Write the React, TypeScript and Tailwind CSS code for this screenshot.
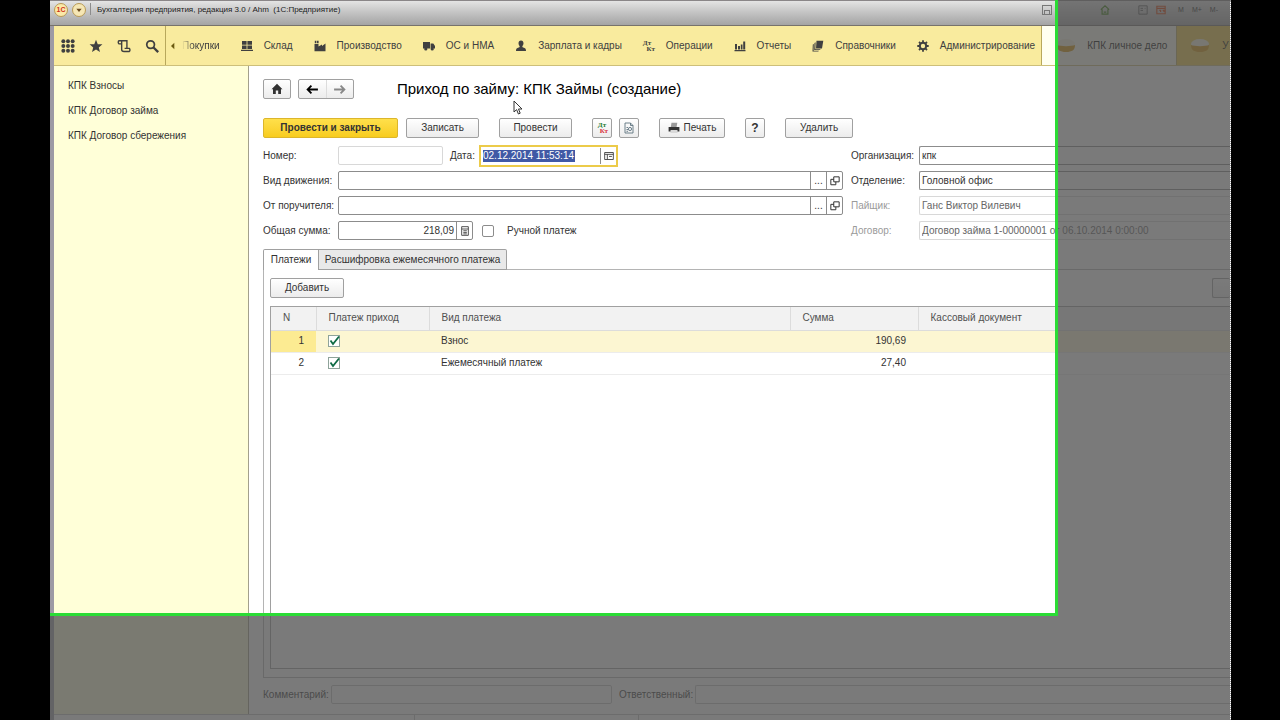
import { useState } from 'react';
import type { ReactNode } from 'react';
import clsx from 'clsx';

type IconProps = { children: ReactNode; className?: string };

const Icon = ({ children, className = 'size-3' }: IconProps) => (
  <svg viewBox="0 0 12 12" fill="currentColor" aria-hidden="true" className={clsx('shrink-0', className)}>
    {children}
  </svg>
);

const stroke = { fill: 'none', stroke: 'currentColor' };

const GridIcon = () => (
  <Icon className="size-[14px]">
    {[2, 6, 10].map((y) => [2, 6, 10].map((x) => <circle key={`${x}-${y}`} cx={x} cy={y} r="1.7" />))}
  </Icon>
);

const StarIcon = () => (
  <Icon className="size-[14px]">
    <path d="M6 .6l1.5 3.8 4 .2-3.100 2.600 1 4L6 9l-3.400 2.200 1-4L.5 4.600l4-.2z" />
  </Icon>
);

const HistoryIcon = () => (
  <Icon className="size-[14px]">
    <path {...stroke} strokeWidth="1.200" d="M4 1.500h4.500v6M4 1.500v7.500c0 1.500 1 1.700 2 1.700h4.500c.8-.6.8-2 0-2.700H6.500M4 4.200H1.800c-1-.8-1-2.200 0-2.700H4" />
  </Icon>
);

const SearchIcon = () => (
  <Icon className="size-[14px]">
    <circle {...stroke} strokeWidth="1.500" cx="4.800" cy="4.800" r="3.300" />
    <path {...stroke} strokeWidth="2" d="M7.300 7.300l4 4" />
  </Icon>
);

const StockIcon = () => (
  <Icon>
    <path d="M1 1h4.600v3.700H1zM6.400 1H11v3.700H6.400zM1 5.400h4.600V9H1zM6.400 5.400H11V9H6.400zM0 9.800h12V11H0z" />
  </Icon>
);

const FactoryIcon = () => (
  <Icon>
    <path d="M.5 11.300V4h4v2.500L8 4.500V6l3.500-2.500v7.800zM.8.800h1.600v2.400H.8zM3 .8h1.600v2.400H3z" />
  </Icon>
);

const TruckIcon = () => (
  <Icon>
    <path d="M0 2h7v6.500H0zM7.600 3.500h2.700L12 6v2.500H7.600z" />
    <circle cx="2.800" cy="9" r="1.600" />
    <circle cx="9.200" cy="9" r="1.600" />
  </Icon>
);

const PersonIcon = () => (
  <Icon>
    <path d="M6 .5c1.700 0 2.500 1.200 2.500 2.700S7.600 5.800 7.300 6.200c0 1 .4 1.200 1.700 1.600 1.500.5 2 1.200 2 3.200H1c0-2 .5-2.700 2-3.200 1.300-.4 1.700-.6 1.700-1.600-.3-.4-1.200-1.500-1.200-3S4.300.5 6 .5z" />
  </Icon>
);

const ChartIcon = () => (
  <Icon>
    <path d="M.5 10h11v1.200H.5zM1 4h2v5.500H1zM4 6h2v3.500H4zM6.800 4.500h1.700v5H6.800zM9.200 1.500h2v8h-2z" />
  </Icon>
);

const BooksIcon = () => (
  <Icon>
    <path d="M4.500.7h6.800L10 8.500H4zM3.600 2.300L2.500 3l-.3 7h5.600l1-.8H3.400zM1.800 4L.8 4.600l-.3 7h5.700l.8-.8H1.600z" />
  </Icon>
);

const GearIcon = () => (
  <Icon>
    <circle {...stroke} strokeWidth="2" cx="6" cy="6" r="3.200" />
    <path
      {...stroke}
      strokeWidth="1.800"
      d="M6 .3v2M6 9.700v2M.3 6h2M9.700 6h2M2 2l1.400 1.400M8.600 8.600L10 10M10 2L8.600 3.400M3.400 8.600L2 10"
    />
  </Icon>
);

const DtKt = ({ colored = false }: { colored?: boolean }) => (
  <span aria-hidden="true" className="flex w-3 shrink-0 flex-col font-serif text-[7px] leading-[6px] font-bold">
    <span className={clsx(colored && 'text-[#1d7a2f]')}>Дт</span>
    <span className={clsx('self-end', colored && 'text-[#d8323c]')}>Кт</span>
  </span>
);

const HomeIcon = () => (
  <Icon>
    <path d="M6 .8l5.500 5.400H10V11H7.200V7.500H4.800V11H2V6.200H.5z" />
  </Icon>
);

const ArrowIcon = ({ flip = false }: { flip?: boolean }) => (
  <Icon className={clsx('size-[13px]', flip && 'rotate-180')}>
    <path {...stroke} strokeWidth="1.700" d="M11 6H1.500M5 2.500L1.500 6 5 9.500" />
  </Icon>
);

const ReportIcon = () => (
  <Icon>
    <path {...stroke} strokeWidth=".9" d="M2 1h5.500L10 3.500V11H2zM7.500 1v2.500H10M3.500 5.500h1.500M3.500 7.500h1.500M3.500 9.300h1.500" />
    <circle {...stroke} strokeWidth=".9" cx="7" cy="7" r="1.600" />
  </Icon>
);

const PrinterIcon = () => (
  <Icon>
    <path fill="#9a9a9a" d="M3.500.8h5.800L8.600 5H2.800z" />
    <path d="M.6 5h10.800v4.500H.6z" />
    <path fill="#d9d9d9" d="M2.500 8h7v3h-7z" />
  </Icon>
);

const CalendarIcon = () => (
  <Icon className="size-[10px]">
    <path {...stroke} d="M.8 1.800h10.400v8.400H.8zM.8 4h10.400M4 4v6M6 6.500h3.500" />
  </Icon>
);

const CalculatorIcon = () => (
  <Icon className="size-[10px]">
    <path {...stroke} d="M2 .8h8v10.400H2zM2 3.600h8M4 5.700h4.200M4 7.700h4.200M4 9.500h4.200" />
  </Icon>
);

const OpenIcon = () => (
  <Icon className="size-[10px]">
    <path {...stroke} strokeWidth="1.200" d="M4.500 1h6.500v6H4.500zM4.500 4H1v6.500h6V7" />
  </Icon>
);

const CoinsIcon = () => (
  <svg viewBox="0 0 20 16" aria-hidden="true" className="h-4 w-5 shrink-0">
    <ellipse cx="10" cy="6" rx="9" ry="5" fill="#f6f2dc" />
    <path fill="#d89400" d="M1 7c3 1.500 15 1.500 18 0 0 5-3 7-9 7s-9-2-9-7z" />
  </svg>
);

const sections = [
  { title: 'Склад', icon: <StockIcon /> },
  { title: 'Производство', icon: <FactoryIcon /> },
  { title: 'ОС и НМА', icon: <TruckIcon /> },
  { title: 'Зарплата и кадры', icon: <PersonIcon /> },
  { title: 'Операции', icon: <DtKt /> },
  { title: 'Отчеты', icon: <ChartIcon /> },
  { title: 'Справочники', icon: <BooksIcon /> },
  { title: 'Администрирование', icon: <GearIcon /> },
];

const quickTools = [
  { title: 'Меню', icon: <GridIcon /> },
  { title: 'Избранное', icon: <StarIcon /> },
  { title: 'История', icon: <HistoryIcon /> },
  { title: 'Поиск', icon: <SearchIcon /> },
];

const TitleBar = () => (
  <header className="flex h-[26px] shrink-0 items-start border-t border-b border-t-[#8a8688] border-b-[#77736c] bg-linear-to-b from-[#e4e4e4] via-[#c2c2c2] to-[#a4a4a4] pt-[2px] pl-1">
    <span className="flex size-[14px] items-center justify-center rounded-full border border-[#b89a56] bg-[#fbe9a8] text-[7px] font-bold text-[#d0321e]">
      1С
    </span>
    <button
      aria-label="Главное меню"
      className="ml-1 flex size-[14px] items-center justify-center rounded-full border border-[#b89a56] bg-[#f5e6b4] text-[#6b4a1e]"
    >
      <Icon className="size-2">
        <path d="M2 4h8L6 9z" />
      </Icon>
    </button>
    <span className="ml-[4px] h-3 border-l border-[#8c8c8c]" />
    <span className="ml-[6px] text-[8px] leading-[14px] whitespace-pre text-[#1c1c1c]">
      Бухгалтерия предприятия, редакция 3.0 / Ahm  (1С:Предприятие)
    </span>
    <div className="mr-3 ml-auto flex items-center gap-2 pt-[2px] text-[7px] leading-[10px] text-[#222]">
      <span className="mr-10 flex size-[10px] items-end justify-center border border-[#777]">
        <span className="h-1 w-[6px] border border-b-0 border-[#777]" />
      </span>
      <Icon className="mr-5 size-[10px] text-[#2f7a00]">
        <path {...stroke} strokeWidth="1.400" d="M1 5.500L6 1l5 4.500M2.500 5v6h7V5M4.500 8.500h3" />
      </Icon>
      <Icon className="size-[10px] text-[#444]">
        <path {...stroke} d="M1 1h10v10H1zM3 4h3M3 6.500h3M8 4h1" />
      </Icon>
      <Icon className="size-[10px] text-[#d83a00]">
        <path {...stroke} strokeWidth="1.400" d="M1 1.500h10v9H1zM1 4h10M4 6.500h1.500v2M8 6.500h1.500v2" />
      </Icon>
      <span className="pl-1">M</span>
      <span>M+</span>
      <span>M-</span>
    </div>
  </header>
);

const SectionBar = () => (
  <nav className="flex h-10 shrink-0 overflow-hidden border-b border-[#cdbf7a] bg-[#f9eb9e] text-[#404040]">
    <div className="flex w-[112px] shrink-0 items-center gap-[14px] border-r border-[#b8a85c] pl-[7px]">
      {quickTools.map(({ title, icon }) => (
        <button key={title} aria-label={title}>
          {icon}
        </button>
      ))}
    </div>
    <button aria-label="Прокрутить влево" className="w-4 shrink-0 pl-[3px] text-[#6b5a10]">
      <Icon className="size-2">
        <path d="M8 1v10L3 6z" />
      </Icon>
    </button>
    <div className="flex shrink-0 items-center gap-[21px] border-r border-[#b8a85c] pr-[6px]">
      <a href="#buy" className="mask-linear-90 mask-linear-from-transparent mask-linear-from-0% mask-linear-to-black mask-linear-to-30%">
        Покупки
      </a>
      {sections.map(({ title, icon }) => (
        <a key={title} href="#section" className="flex items-center gap-[11px] whitespace-nowrap">
          {icon}
          {title}
        </a>
      ))}
    </div>
    <a href="#case" className="flex w-[135px] shrink-0 items-center gap-[11px] border-r border-[#b8a85c] bg-[#fffff0] pl-[14px] whitespace-nowrap text-black">
      <CoinsIcon />
      КПК личное дело
    </a>
    <a href="#account" className="flex flex-1 items-center gap-3 bg-[#f0cc40] pl-[13px] text-black">
      <CoinsIcon />
      У
    </a>
  </nav>
);

const Sidebar = () => (
  <aside className="w-[195px] shrink-0 border-r border-[#a3a08c] bg-[#ffffd8] pt-[14px] pl-[14px]">
    <ul className="flex flex-col gap-[13px] leading-3">
      {['КПК Взносы', 'КПК Договор займа', 'КПК Договор сбережения'].map((text) => (
        <li key={text}>
          <a href="#item">{text}</a>
        </li>
      ))}
    </ul>
  </aside>
);

const Button = ({ children, className, label }: { children: ReactNode; className: string; label?: string }) => (
  <button
    aria-label={label}
    className={clsx(
      'flex h-5 shrink-0 items-center justify-center gap-1 rounded-xs border border-[#a0a0a0] bg-linear-to-b from-white to-[#ececec]',
      className,
    )}
  >
    {children}
  </button>
);

const inputBox = 'h-[19px] rounded-xs border border-[#8c8c8c] bg-white';

const Lookup = ({ id, label }: { id: string; label: string }) => (
  <div className="flex h-[25px] items-center">
    <label htmlFor={id} className="w-[75px]">
      {label}
    </label>
    <div className={clsx('flex w-[505px]', inputBox)}>
      <input id={id} className="min-w-0 flex-1 px-1 outline-none" />
      <button type="button" aria-label="Выбрать" className="w-4 border-l border-[#8c8c8c]">
        ...
      </button>
      <button
        type="button"
        aria-label="Открыть"
        className="flex w-4 items-center justify-center border-l border-[#8c8c8c]"
      >
        <OpenIcon />
      </button>
    </div>
  </div>
);

type SideFieldProps = { id: string; label: string; value: string; muted?: boolean };

const SideField = ({ id, label, value, muted = false }: SideFieldProps) => (
  <div className="flex h-[25px] items-center">
    <label htmlFor={id} className={clsx('w-[68px] shrink-0', muted && 'text-[#9a9a9a]')}>
      {label}
    </label>
    <input
      id={id}
      defaultValue={value}
      readOnly={muted}
      className={clsx(
        'h-[19px] min-w-0 flex-1 rounded-l-xs border border-r-0 bg-white px-[2px] outline-none',
        muted ? 'border-[#d8d8d8] text-[#666]' : 'border-[#8c8c8c]',
      )}
    />
  </div>
);

const Commands = () => (
  <>
    <div className="flex items-center">
      <Button label="Домой" className="w-7">
        <HomeIcon />
      </Button>
      <div className="ml-[7px] flex h-5 w-14 rounded-xs border border-[#a0a0a0] bg-linear-to-b from-white to-[#ececec]">
        <button aria-label="Назад" className="flex flex-1 items-center justify-center text-black">
          <ArrowIcon />
        </button>
        <button aria-label="Вперед" className="flex flex-1 items-center justify-center border-l border-[#dcdcdc] text-[#888]">
          <ArrowIcon flip />
        </button>
      </div>
      <h1 className="ml-[43px] text-[15px] leading-5 whitespace-nowrap text-black">
        Приход по займу: КПК Займы (создание)
      </h1>
    </div>
    <div className="mt-[19px] flex items-center gap-5">
      <div className="flex gap-2">
        <button className="h-5 w-[135px] rounded-xs border border-[#dcb62c] bg-linear-to-b from-[#ffe04a] to-[#f8cc1c] font-bold">
          Провести и закрыть
        </button>
        <Button className="w-[73px]">Записать</Button>
      </div>
      <Button className="w-[73px]">Провести</Button>
      <div className="flex gap-[7px]">
        <Button label="Дт Кт" className="w-5">
          <DtKt colored />
        </Button>
        <Button label="Отчет" className="w-5 text-[#5f7480]">
          <ReportIcon />
        </Button>
      </div>
      <Button className="w-[66px]">
        <PrinterIcon />
        Печать
      </Button>
      <Button label="Справка" className="w-5">
        <span className="text-[12px] font-bold">?</span>
      </Button>
      <Button className="w-[68px]">Удалить</Button>
    </div>
  </>
);

const Form = () => (
  <form className="mt-[5px] flex gap-2">
    <div className="shrink-0">
      <div className="flex h-[25px] items-center">
        <label htmlFor="number" className="w-[75px]">
          Номер:
        </label>
        <input id="number" className="h-[19px] w-[105px] rounded-xs border border-[#d8d8d8] px-1 outline-none" />
        <label htmlFor="date" className="ml-[7px] w-[29px]">
          Дата:
        </label>
        <div className="flex h-[22px] w-[139px] items-center border-2 border-[#eccb4a] bg-white pl-[2px]">
          <input
            id="date"
            defaultValue="02.12.2014 11:53:14"
            className="h-3 w-[92px] bg-[#4059a5] text-white outline-none"
          />
          <button
            type="button"
            aria-label="Календарь"
            className="ml-auto flex h-4 w-4 items-center justify-center border-l border-[#8c8c8c]"
          >
            <CalendarIcon />
          </button>
        </div>
      </div>
      <Lookup id="movement" label="Вид движения:" />
      <Lookup id="guarantor" label="От поручителя:" />
      <div className="flex h-[25px] items-center">
        <label htmlFor="total" className="w-[75px]">
          Общая сумма:
        </label>
        <div className={clsx('flex w-[135px]', inputBox)}>
          <input id="total" defaultValue="218,09" className="min-w-0 flex-1 px-[2px] text-right outline-none" />
          <button
            type="button"
            aria-label="Калькулятор"
            className="flex w-4 items-center justify-center border-l border-[#8c8c8c]"
          >
            <CalculatorIcon />
          </button>
        </div>
        <input
          id="manual"
          type="checkbox"
          className="ml-[9px] size-3 appearance-none rounded-xs border border-[#8c8c8c] bg-white"
        />
        <label htmlFor="manual" className="ml-[13px]">
          Ручной платеж
        </label>
      </div>
    </div>
    <div className="min-w-0 flex-1">
      <SideField id="org" label="Организация:" value="кпк" />
      <SideField id="dept" label="Отделение:" value="Головной офис" />
      <SideField id="member" label="Пайщик:" value="Ганс Виктор Вилевич" muted />
      <SideField id="contract" label="Договор:" value="Договор займа 1-00000001 от 06.10.2014 0:00:00" muted />
    </div>
  </form>
);

const payments = [
  { id: 1, kind: 'Взнос', sum: '190,69' },
  { id: 2, kind: 'Ежемесячный платеж', sum: '27,40' },
];

const PaymentTable = () => {
  const [selected, setSelected] = useState(1);

  return (
    <div className="mt-2 ml-[6px] flex-1 border border-r-0 border-[#a0a0a0]">
      <table className="w-full table-fixed border-collapse text-left">
        <colgroup>
          <col className="w-[45px]" />
          <col className="w-[113px]" />
          <col className="w-[361px]" />
          <col className="w-[128px]" />
          <col />
        </colgroup>
        <thead>
          <tr className="h-[23px] border-b border-[#dcdcdc] bg-[#f2f2f2] text-[#505050]">
            <th className="border-r border-[#dcdcdc] pl-3 font-normal">N</th>
            <th className="border-r border-[#dcdcdc] pl-3 font-normal">Платеж приход</th>
            <th className="border-r border-[#dcdcdc] pl-3 font-normal">Вид платежа</th>
            <th className="border-r border-[#dcdcdc] pl-3 font-normal">Сумма</th>
            <th className="pl-3 font-normal">Кассовый документ</th>
          </tr>
        </thead>
        <tbody>
          {payments.map(({ id, kind, sum }) => (
            <tr
              key={id}
              onClick={() => setSelected(id)}
              className={clsx('h-[22px] border-b border-[#ececec]', selected === id && 'bg-[#fcf6d2]')}
            >
              <td className={clsx('pr-3 text-right', selected === id && 'bg-[#fceb92]')}>{id}</td>
              <td className="pl-3">
                <span className="relative block size-3">
                  <input
                    type="checkbox"
                    defaultChecked
                    aria-label={kind}
                    className="block size-3 appearance-none border border-[#8fa39a] bg-white"
                  />
                  <Icon className="pointer-events-none absolute inset-0 size-3 text-[#0f6b45]">
                    <path {...stroke} strokeWidth="1.800" d="M2.500 5.500L5 9l6-7.500" />
                  </Icon>
                </span>
              </td>
              <td className="pl-3">{kind}</td>
              <td className="pr-3 text-right">{sum}</td>
              <td />
            </tr>
          ))}
        </tbody>
      </table>
    </div>
  );
};

const Tabs = () => (
  <section className="mt-[6px] flex flex-1 flex-col">
    <div role="tablist" className="z-10 -mb-px flex h-[21px]">
      <button role="tab" aria-selected="true" className="w-14 rounded-tl-xs border border-b-0 border-[#a0a0a0] bg-white">
        Платежи
      </button>
      <button role="tab" aria-selected="false" className="w-[188px] rounded-tr-xs border border-l-0 border-[#a0a0a0] bg-[#e9e9e9]">
        Расшифровка ежемесячного платежа
      </button>
    </div>
    <div className="flex flex-1 flex-col border border-r-0 border-[#b4b4b4] pt-2 pb-2">
      <div className="flex justify-between pl-[6px]">
        <Button className="w-[74px]">Добавить</Button>
        <Button label="Еще" className="w-[18px] border-r-0">
          {null}
        </Button>
      </div>
      <PaymentTable />
    </div>
  </section>
);

const Footer = () => (
  <div className="mt-[7px] mb-[10px] flex items-center">
    <label htmlFor="comment" className="w-[68px] shrink-0 whitespace-nowrap">
      Комментарий:
    </label>
    <input id="comment" className="h-[19px] w-[281px] rounded-xs border border-[#c4c4c4] px-1" />
    <label htmlFor="author" className="ml-[7px] w-[76px] shrink-0 whitespace-nowrap">
      Ответственный:
    </label>
    <input id="author" className="h-[19px] min-w-0 flex-1 rounded-l-xs border border-r-0 border-[#c4c4c4] px-1" />
  </div>
);

const Pointer = () => (
  <svg viewBox="0 0 10 15" aria-hidden="true" className="absolute top-[100px] left-[463px] h-[15px] w-[10px]">
    <path fill="#fff" stroke="#333" d="M1 1v11l2.600-2.400L5.400 14l1.800-.8L5.500 9H9z" />
  </svg>
);

// Everything outside the recorded area is dimmed by the frame's spread shadow.
const CaptureFrame = () => (
  <div className="pointer-events-none absolute -top-1 right-[172px] bottom-[104px] left-0 z-20 border-r-3 border-b-3 border-[#2bdc35] shadow-[0_0_0_4000px_rgba(82,82,82,0.77)]" />
);

const App = () => (
  <div className="min-h-screen bg-black pr-[49px] pl-[50px] font-['Liberation_Sans',Arial,sans-serif] text-[10px] leading-3 text-[#333]">
    <div className="relative flex min-h-screen flex-col overflow-hidden border-r border-dotted border-[#9a9a9a] bg-white">
      <TitleBar />
      <div className="flex flex-1 flex-col border-l-4 border-[#9d9aa4]">
        <SectionBar />
        <div className="flex flex-1">
          <Sidebar />
          <main className="flex min-w-0 flex-1 flex-col pt-[13px] pl-[14px]">
            <Commands />
            <Form />
            <Tabs />
            <Footer />
          </main>
        </div>
        <div className="flex h-[6px] shrink-0 border-t border-[#c4c4c4]">
          <span className="w-[361px] border-r border-[#c4c4c4]" />
          <span className="w-[224px] border-r border-[#c4c4c4]" />
        </div>
      </div>
      <Pointer />
      <CaptureFrame />
    </div>
  </div>
);

export default App;
